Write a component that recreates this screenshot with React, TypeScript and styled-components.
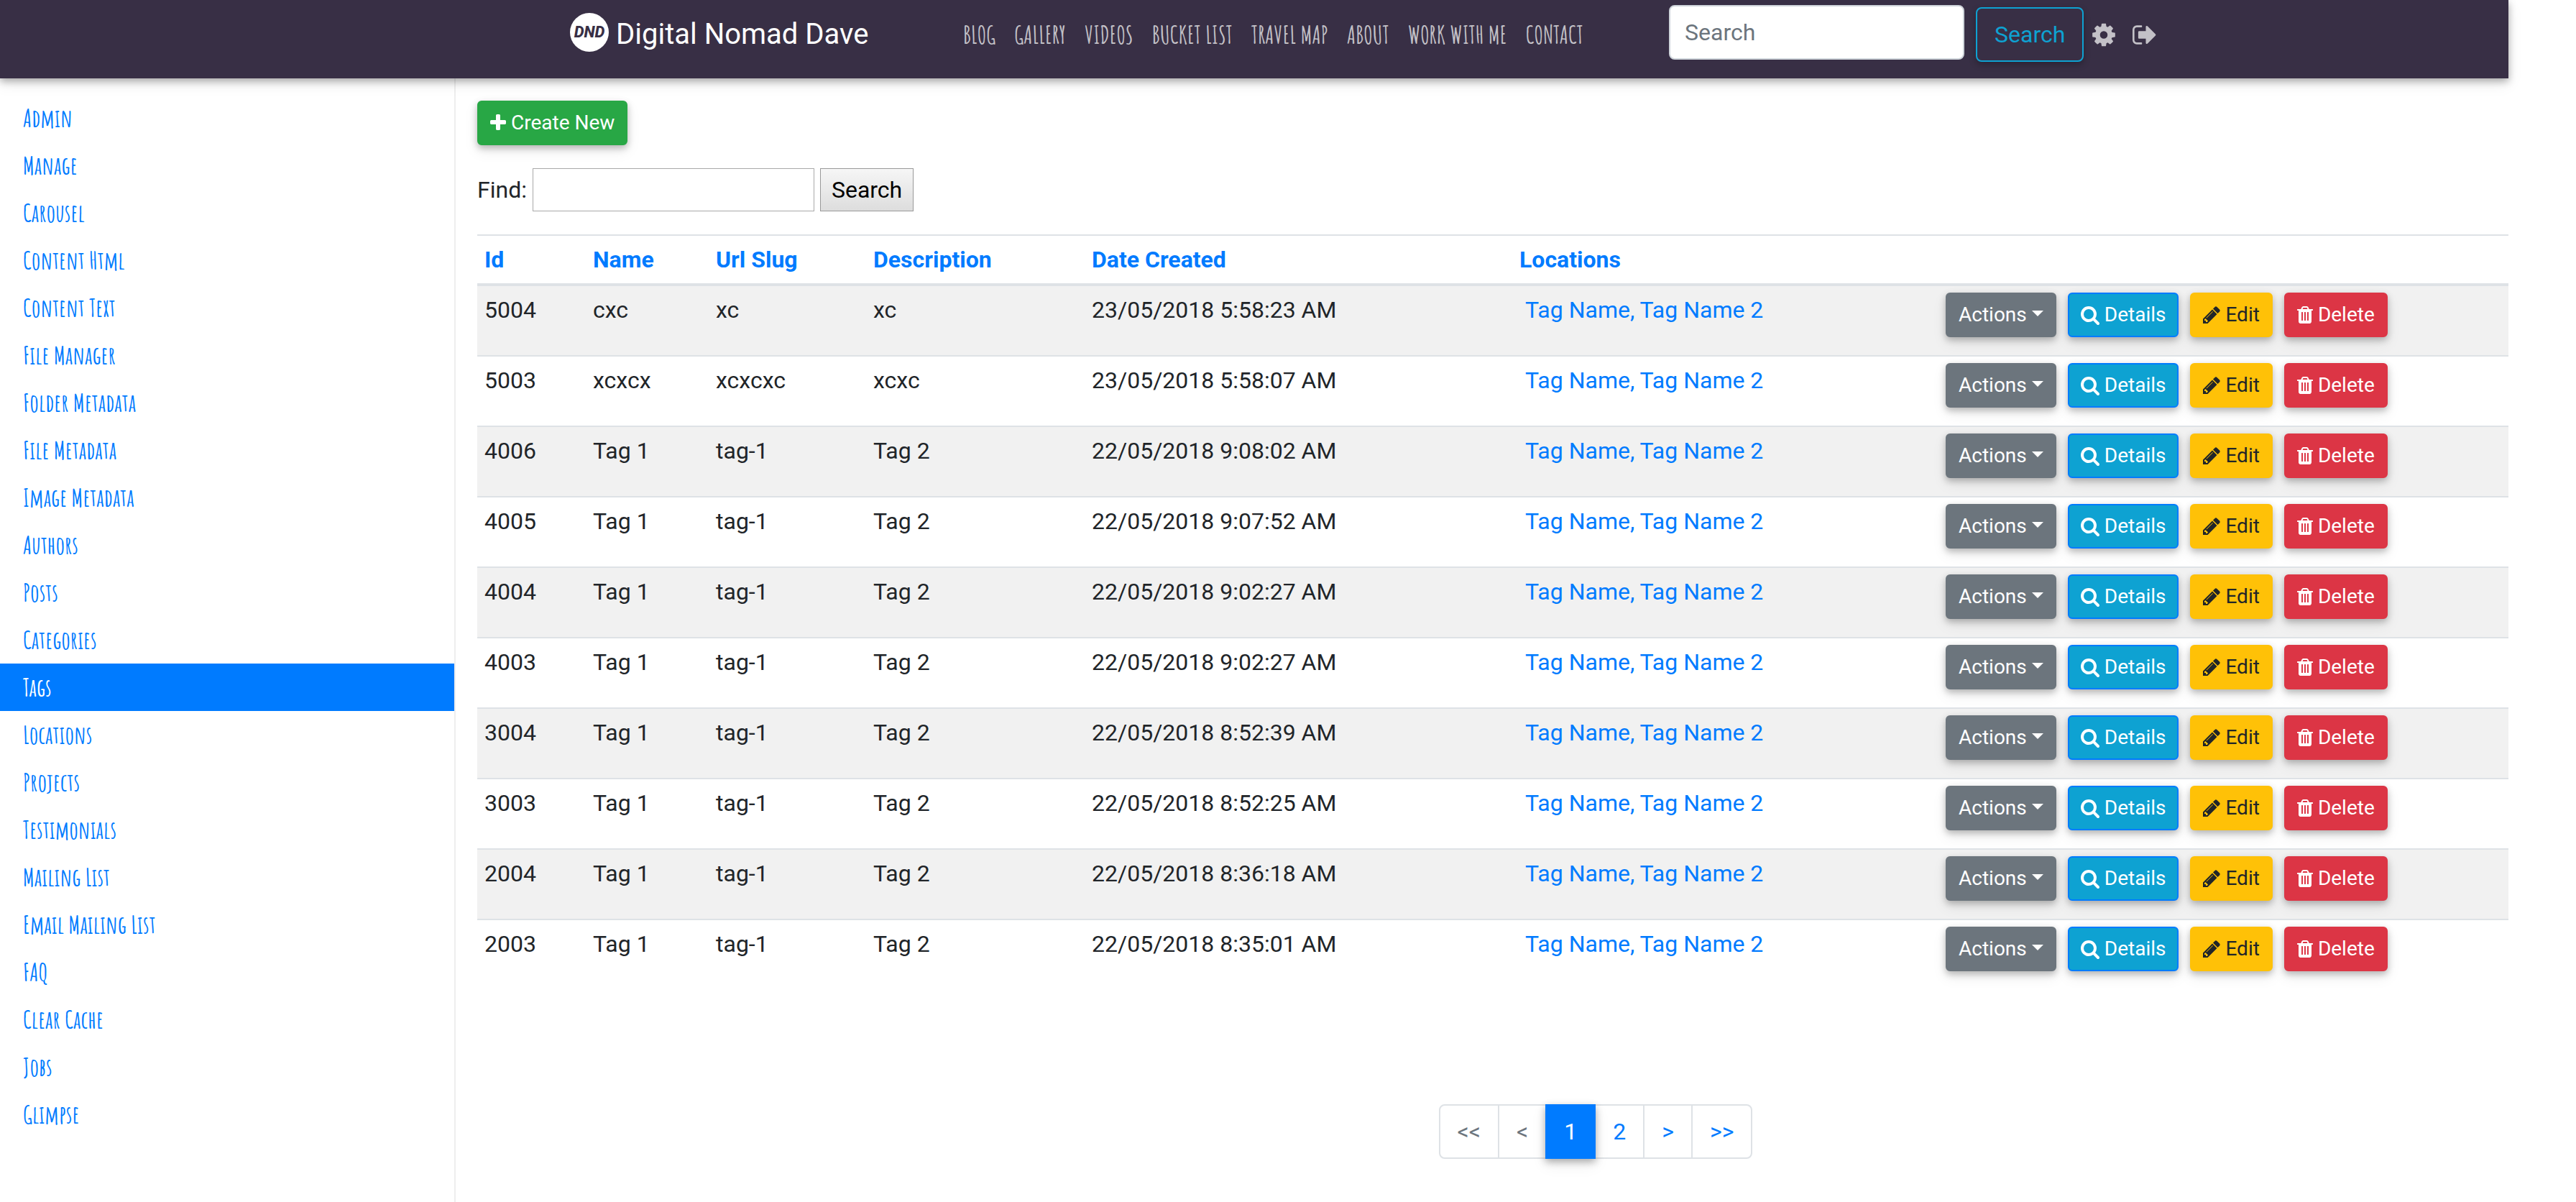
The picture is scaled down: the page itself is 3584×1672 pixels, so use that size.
import React from 'react';
import styled, { createGlobalStyle, css } from 'styled-components';

const GlobalStyle = createGlobalStyle`
  *, *::before, *::after { box-sizing: border-box; }
  body {
    margin: 0;
    background: #fff;
    color: #212529;
    font-family: Roboto, "Liberation Sans", sans-serif;
    font-size: 32px;
    line-height: 48px;
  }
  a { color: #007bff; text-decoration: none; }
  button, input { font-family: inherit; }
`;

const narrow = css`
  font-family: "Amatic SC", "Liberation Sans Narrow", Roboto, sans-serif;
  font-size: 35px;
  font-weight: 700;
`;

const Page = styled.div`
  display: flex;
  flex-direction: column;
  min-height: 100vh;
  margin-right: 94px;
`;

const Navbar = styled.header`
  position: relative;
  display: flex;
  align-items: center;
  padding: 7px 0 20px 793px;
  background: #382f45;
  box-shadow: 0 4px 10px rgba(0, 0, 0, 0.3), 0 8px 20px rgba(0, 0, 0, 0.08);
`;

const Brand = styled.a`
  display: flex;
  align-items: center;
  gap: 10px;
  width: 532px;
  color: #fff;
  font-size: 40px;
  white-space: nowrap;
`;

const Logo = styled.span`
  display: grid;
  place-items: center;
  width: 54px;
  height: 54px;
  margin-bottom: 6px;
  border-radius: 50%;
  background: #fff;
  color: #382f45;
  font: italic 800 22px/24px Roboto, sans-serif;
`;

const NavLinks = styled.nav`
  display: flex;
  justify-content: space-between;
  width: 893px;
  padding: 0 15px;
`;

const NavLink = styled.a`
  ${narrow}
  color: #c3c1c7;
  text-transform: uppercase;
  white-space: nowrap;
`;

const NavSearch = styled.form`
  display: flex;
  align-items: center;
  gap: 16px;
  margin: 0 12px 0 104px;
`;

const NavInput = styled.input`
  width: 411px;
  height: 76px;
  margin-bottom: 6px;
  padding: 0 20px;
  border: 2px solid #ced4da;
  border-radius: 8px;
  font-size: 32px;
  &::placeholder { color: #6c757d; opacity: 1; }
`;

const OutlineButton = styled.button`
  height: 76px;
  padding: 0 24px;
  border: 2px solid #0ea2d2;
  border-radius: 8px;
  background: transparent;
  color: #0ea2d2;
  font-size: 32px;
  box-shadow: 0 4px 10px rgba(0, 0, 0, 0.25);
`;

const IconLinks = styled.div`
  display: flex;
  gap: 24px;
  a { display: flex; color: #c3c1c7; }
`;

const Body = styled.div`
  display: flex;
  flex: 1;
`;

const Sidebar = styled.nav`
  flex: 0 0 634px;
  padding: 22px 0;
  border-right: 2px solid #eee;
`;

const SideLink = styled.a<{ $active: boolean }>`
  ${narrow}
  display: block;
  padding: 9px 32px;
  ${(p) => p.$active && css`background: #007bff; color: #fff;`}
`;

const Main = styled.main`
  flex: 1;
  min-width: 0;
  padding: 31px 0 60px 30px;
`;

const tones = {
  green: css`background: #28a745; border-color: #28a745; color: #fff;`,
  grey: css`background: #6c757d; border-color: #6c757d; color: #fff;`,
  blue: css`background: #0ea2d2; border-color: #007bff; color: #fff;`,
  yellow: css`background: #ffc107; border-color: #ffc107; color: #212529;`,
  red: css`background: #dc3545; border-color: #dc3545; color: #fff;`,
};

const Button = styled.button<{ $tone: keyof typeof tones }>`
  display: inline-flex;
  align-items: center;
  gap: 7px;
  height: 62px;
  padding: 0 16px;
  border: 2px solid;
  border-radius: 6px;
  font-size: 28px;
  line-height: 42px;
  white-space: nowrap;
  box-shadow: 0 4px 10px rgba(0, 0, 0, 0.25), 0 8px 20px rgba(0, 0, 0, 0.08);
  ${(p) => tones[p.$tone]}
`;

const Caret = styled.span`
  margin-bottom: 4px;
  border-top: 8px solid;
  border-left: 8px solid transparent;
  border-right: 8px solid transparent;
`;

const FindForm = styled.form`
  display: flex;
  align-items: center;
  gap: 8px;
  margin: 32px 0;
`;

const FindInput = styled.input`
  width: 392px;
  height: 60px;
  border: 1px solid #a9a9a9;
  font-size: 32px;
`;

const FindButton = styled.button`
  height: 60px;
  padding: 0 15px;
  border: 1px solid #999;
  background: linear-gradient(#f6f6f6, #ddd);
  color: #000;
  font-size: 32px;
`;

const Table = styled.table`
  width: 100%;
  table-layout: fixed;
  border-spacing: 0;
  th, td {
    padding: 9px 10px;
    border-top: 2px solid #dee2e6;
    text-align: left;
    vertical-align: top;
  }
  th { border-bottom: 4px solid #dee2e6; font-weight: 700; height: 72px; }
  td { height: 98px; }
  tbody tr:first-child td { border-top: 0; height: 96px; }
  tbody tr:nth-child(odd) { background: #f1f1f1; }
`;

const Actions = styled.div`
  display: flex;
  gap: 16px;
`;

const TagLink = styled.a`
  padding-left: 8px;
`;

const Pagination = styled.nav`
  display: flex;
  justify-content: center;
  margin-top: 160px;
  padding-left: 288px;
`;

const PageLink = styled.a<{ $state?: 'active' | 'disabled' }>`
  margin-left: -2px;
  padding: 12px 24px;
  border: 2px solid #dee2e6;
  background: #fff;
  &:first-child { border-radius: 8px 0 0 8px; }
  &:last-child { border-radius: 0 8px 8px 0; }
  ${(p) => p.$state === 'disabled' && css`color: #6c757d;`}
  ${(p) => p.$state === 'active' && css`
    z-index: 1;
    border-color: #007bff;
    background: #007bff;
    color: #fff;
    box-shadow: 0 4px 10px rgba(0, 0, 0, 0.3), 0 8px 20px rgba(0, 0, 0, 0.08);
  `}
`;

const paths = {
  search: 'M1216 832q0-185-131.500-316.500t-316.500-131.500-316.500 131.500-131.500 316.500 131.500 316.500 316.500 131.500 316.500-131.500 131.500-316.500zm512 832q0 52-38 90t-90 38q-54 0-90-38l-343-342q-179 124-399 124-143 0-273.500-55.500t-225-150-150-225-55.500-273.500 55.500-273.500 150-225 225-150 273.500-55.500 273.500 55.500 225 150 150 225 55.500 273.500q0 220-124 399l343 343q37 37 37 90z',
  plus: 'M1600 736v192q0 40-28 68t-68 28h-416v416q0 40-28 68t-68 28h-192q-40 0-68-28t-28-68v-416h-416q-40 0-68-28t-28-68v-192q0-40 28-68t68-28h416v-416q0-40 28-68t68-28h192q40 0 68 28t28 68v416h416q40 0 68 28t28 68z',
  pencil: 'M491 1536l91-91-235-235-91 91v107h128v128h107zm523-928q0-22-22-22-10 0-17 7l-542 542q-7 7-7 17 0 22 22 22 10 0 17-7l542-542q7-7 7-17zm-54-192l416 416-832 832h-416v-416zm683 96q0 53-37 90l-166 166-416-416 166-165q36-38 90-38 53 0 91 38l235 234q37 39 37 91z',
  trash: 'M704 1376v-704q0-14-9-23t-23-9h-64q-14 0-23 9t-9 23v704q0 14 9 23t23 9h64q14 0 23-9t9-23zm256 0v-704q0-14-9-23t-23-9h-64q-14 0-23 9t-9 23v704q0 14 9 23t23 9h64q14 0 23-9t9-23zm256 0v-704q0-14-9-23t-23-9h-64q-14 0-23 9t-9 23v704q0 14 9 23t23 9h64q14 0 23-9t9-23zm-544-992h448l-48-117q-7-9-17-11h-317q-10 2-17 11zm928 32v64q0 14-9 23t-23 9h-96v948q0 83-47 143.500t-113 60.500h-832q-66 0-113-58.500t-47-141.500v-952h-96q-14 0-23-9t-9-23v-64q0-14 9-23t23-9h309l70-167q15-37 54-63t79-26h320q40 0 79 26t54 63l70 167h309q14 0 23 9t9 23z',
  signOut: 'M704 1440q0 4 1 20t.5 26.500-3 23.500-10 19.500-20.500 6.500h-320q-119 0-203.500-84.500t-84.500-203.500v-704q0-119 84.500-203.500t203.500-84.500h320q13 0 22.500 9.500t9.500 22.500q0 4 1 20t.5 26.500-3 23.500-10 19.500-20.500 6.500h-320q-66 0-113 47t-47 113v704q0 66 47 113t113 47h312l11.500 1 11.500 3 8 5.500 7 9 2 13.500zm928-544q0 26-19 45l-544 544q-19 19-45 19t-45-19-19-45v-288h-448q-26 0-45-19t-19-45v-384q0-26 19-45t45-19h448v-288q0-26 19-45t45-19 45 19l544 544q19 19 19 45z',
  cog: 'M1152 896q0-106-75-181t-181-75-181 75-75 181 75 181 181 75 181-75 75-181zm512-109v222q0 12-8 23t-20 13l-185 28q-19 54-39 91 35 50 107 138 10 12 10 25t-9 23q-27 37-99 108t-94 71q-12 0-26-9l-138-108q-44 23-91 38-16 136-29 186-7 28-36 28h-222q-14 0-24.500-8.500t-11.500-21.500l-28-184q-49-16-90-37l-141 107q-10 9-25 9-14 0-25-11-126-114-165-168-7-10-7-23 0-12 8-23 15-21 51-66.500t54-70.500q-27-50-41-99l-183-27q-13-2-21-12.500t-8-23.500v-222q0-12 8-23t19-13l186-28q14-46 39-92-40-57-107-138-10-12-10-24 0-10 9-23 26-36 98.500-107.500t94.500-71.500q13 0 26 10l138 107q44-23 91-38 16-136 29-186 7-28 36-28h222q14 0 24.500 8.500t11.500 21.500l28 184q49 16 90 37l142-107q9-9 24-9 13 0 25 10 129 119 165 170 7 8 7 22 0 12-8 23-15 21-51 66.500t-54 70.500q26 50 41 98l183 28q13 2 21 12.500t8 23.500z',
};

// Horizontal extent of each glyph on its 1792-unit grid: [left edge, width].
const extents: Record<keyof typeof paths, [number, number]> = {
  search: [64, 1664],
  plus: [192, 1408],
  pencil: [128, 1536],
  trash: [192, 1408],
  signOut: [64, 1600],
  cog: [128, 1536],
};

function Icon({ name, size = 28 }: { name: keyof typeof paths; size?: number }) {
  const [left, width] = extents[name];
  return (
    <svg
      viewBox={`${left} 0 ${width} 1792`}
      width={Math.round((size * width) / 1792)}
      height={size}
      fill="currentColor"
      aria-hidden="true"
    >
      <path d={paths[name]} />
    </svg>
  );
}

const navItems = ['Blog', 'Gallery', 'Videos', 'Bucket List', 'Travel Map', 'About', 'Work With Me', 'Contact'];

const sideItems = [
  'Admin', 'Manage', 'Carousel', 'Content Html', 'Content Text', 'File Manager', 'Folder Metadata',
  'File Metadata', 'Image Metadata', 'Authors', 'Posts', 'Categories', 'Tags', 'Locations', 'Projects',
  'Testimonials', 'Mailing List', 'Email Mailing List', 'FAQ', 'Clear Cache', 'Jobs', 'Glimpse',
];

const columns = [
  { label: 'Id', width: 151 },
  { label: 'Name', width: 171 },
  { label: 'Url Slug', width: 219 },
  { label: 'Description', width: 304 },
  { label: 'Date Created', width: 595 },
  { label: 'Locations', width: 593 },
];

const rows = [
  ['5004', 'cxc', 'xc', 'xc', '23/05/2018 5:58:23 AM'],
  ['5003', 'xcxcx', 'xcxcxc', 'xcxc', '23/05/2018 5:58:07 AM'],
  ['4006', 'Tag 1', 'tag-1', 'Tag 2', '22/05/2018 9:08:02 AM'],
  ['4005', 'Tag 1', 'tag-1', 'Tag 2', '22/05/2018 9:07:52 AM'],
  ['4004', 'Tag 1', 'tag-1', 'Tag 2', '22/05/2018 9:02:27 AM'],
  ['4003', 'Tag 1', 'tag-1', 'Tag 2', '22/05/2018 9:02:27 AM'],
  ['3004', 'Tag 1', 'tag-1', 'Tag 2', '22/05/2018 8:52:39 AM'],
  ['3003', 'Tag 1', 'tag-1', 'Tag 2', '22/05/2018 8:52:25 AM'],
  ['2004', 'Tag 1', 'tag-1', 'Tag 2', '22/05/2018 8:36:18 AM'],
  ['2003', 'Tag 1', 'tag-1', 'Tag 2', '22/05/2018 8:35:01 AM'],
];

export default function App() {
  return (
    <Page>
      <GlobalStyle />
      <Navbar>
        <Brand href="#"><Logo>DND</Logo>Digital Nomad Dave</Brand>
        <NavLinks>
          {navItems.map((item) => <NavLink key={item} href="#">{item}</NavLink>)}
        </NavLinks>
        <NavSearch>
          <NavInput type="text" placeholder="Search" aria-label="Search" />
          <OutlineButton type="button">Search</OutlineButton>
        </NavSearch>
        <IconLinks>
          <a href="#" aria-label="Settings"><Icon name="cog" size={37} /></a>
          <a href="#" aria-label="Sign out"><Icon name="signOut" size={37} /></a>
        </IconLinks>
      </Navbar>
      <Body>
        <Sidebar>
          {sideItems.map((item) => (
            <SideLink key={item} href="#" $active={item === 'Tags'}>{item}</SideLink>
          ))}
        </Sidebar>
        <Main>
          <Button type="button" $tone="green"><Icon name="plus" />Create New</Button>
          <FindForm>
            <label htmlFor="find">Find:</label>
            <FindInput id="find" type="text" />
            <FindButton type="button">Search</FindButton>
          </FindForm>
          <Table>
            <colgroup>
              {columns.map((c) => <col key={c.label} style={{ width: c.width }} />)}
              <col />
            </colgroup>
            <thead>
              <tr>
                {columns.map((c) => <th key={c.label}><a href="#">{c.label}</a></th>)}
                <th />
              </tr>
            </thead>
            <tbody>
              {rows.map((row) => (
                <tr key={row[0]}>
                  {row.map((cell, i) => <td key={i}>{cell}</td>)}
                  <td><TagLink href="#">Tag Name, Tag Name 2</TagLink></td>
                  <td>
                    <Actions>
                      <Button type="button" $tone="grey">Actions<Caret /></Button>
                      <Button type="button" $tone="blue"><Icon name="search" />Details</Button>
                      <Button type="button" $tone="yellow"><Icon name="pencil" />Edit</Button>
                      <Button type="button" $tone="red"><Icon name="trash" />Delete</Button>
                    </Actions>
                  </td>
                </tr>
              ))}
            </tbody>
          </Table>
          <Pagination aria-label="Pages">
            <PageLink href="#" $state="disabled">&lt;&lt;</PageLink>
            <PageLink href="#" $state="disabled">&lt;</PageLink>
            <PageLink href="#" $state="active">1</PageLink>
            <PageLink href="#">2</PageLink>
            <PageLink href="#">&gt;</PageLink>
            <PageLink href="#">&gt;&gt;</PageLink>
          </Pagination>
        </Main>
      </Body>
    </Page>
  );
}
